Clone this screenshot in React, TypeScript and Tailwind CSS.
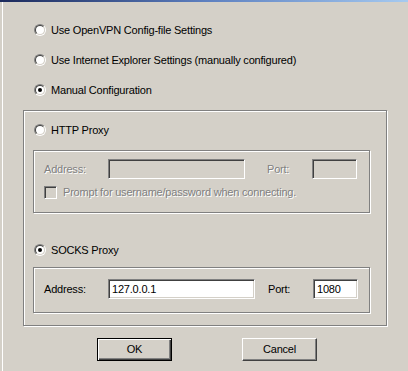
import type { ReactNode } from 'react'

const etched = 'border border-[#808080] shadow-[inset_1px_1px_0_#fff,1px_1px_0_#fff]'
const sunken =
  'border border-t-[#808080] border-l-[#808080] border-b-white border-r-white shadow-[inset_1px_1px_0_#404040,inset_-1px_-1px_0_#d4d0c8]'

function Radio({ checked, children }: { checked?: boolean; children: ReactNode }) {
  return (
    <div className="flex h-[20px] items-center">
      <span className="flex h-[12px] w-[12px] shrink-0 items-center justify-center rounded-full border border-t-[#808080] border-l-[#808080] border-b-white border-r-white">
        <span className="flex h-[10px] w-[10px] items-center justify-center rounded-full border border-t-[#404040] border-l-[#404040] border-b-[#d4d0c8] border-r-[#d4d0c8] bg-white">
          {checked && <span className="h-[4px] w-[4px] rounded-full bg-black" />}
        </span>
      </span>
      <span className="ml-[5px] whitespace-nowrap">{children}</span>
    </div>
  )
}

function Field({ width, value, disabled }: { width: number; value?: string; disabled?: boolean }) {
  return (
    <div
      className={`flex h-[20px] items-center px-[3px] text-black ${sunken} ${disabled ? 'bg-[#d4d0c8]' : 'bg-white'}`}
      style={{ width }}
    >
      {value}
    </div>
  )
}

const dim = 'text-[#808080] [text-shadow:1px_1px_0_#fff]'

function Button({ children, isDefault }: { children: ReactNode; isDefault?: boolean }) {
  return (
    <button
      className={`flex h-[23px] w-[75px] items-center justify-center bg-[#d4d0c8] ${
        isDefault
          ? 'border border-black shadow-[inset_1px_1px_0_#fff,inset_-1px_-1px_0_#404040,inset_-2px_-2px_0_#808080]'
          : 'border border-t-white border-l-white border-b-[#404040] border-r-[#404040] shadow-[inset_-1px_-1px_0_#808080]'
      }`}
    >
      {children}
    </button>
  )
}

export default function App() {
  return (
    <div className="relative h-[371px] w-[408px] overflow-hidden bg-[#d4d0c8] font-['Liberation_Sans',Arial,sans-serif] text-[11px] leading-[13px] tracking-[-0.2px] text-black">
      <div className="h-[2px] bg-linear-to-r from-[#1c2a5c] via-[#5d7fbf] to-[#a6caf0]" />
      <div className="ml-[2px] flex h-[369px] flex-col border-l border-white">
        <div className="ml-[31px] mt-[18px] flex flex-col gap-[10px]">
          <Radio>Use OpenVPN Config-file Settings</Radio>
          <Radio>Use Internet Explorer Settings (manually configured)</Radio>
          <Radio checked>Manual Configuration</Radio>
        </div>

        <div className={`ml-[20px] mt-[10px] flex h-[216px] w-[364px] flex-col ${etched}`}>
          <div className="ml-[10px] mt-[9px]">
            <Radio>HTTP Proxy</Radio>
          </div>
          <div className={`ml-[9px] mt-[10px] h-[63px] w-[337px] ${etched}`}>
            <div className="ml-[10px] mt-[8px] flex items-center">
              <span className={`w-[64px] ${dim}`}>Address:</span>
              <Field width={137} disabled />
              <span className={`ml-[22px] w-[45px] ${dim}`}>Port:</span>
              <Field width={45} disabled />
            </div>
            <div className="ml-[10px] mt-[7px] flex items-center">
              <span className={`h-[13px] w-[13px] shrink-0 ${sunken} bg-[#d4d0c8]`} />
              <span className={`ml-[6px] whitespace-nowrap ${dim}`}>
                Prompt for username/password when connecting.
              </span>
            </div>
          </div>

          <div className="ml-[10px] mt-[27px]">
            <Radio checked>SOCKS Proxy</Radio>
          </div>
          <div className={`ml-[9px] mt-[7px] h-[46px] w-[337px] ${etched}`}>
            <div className="ml-[10px] mt-[11px] flex items-center">
              <span className="w-[64px]">Address:</span>
              <Field width={147} value="127.0.0.1" />
              <span className="ml-[13px] w-[45px]">Port:</span>
              <Field width={45} value="1080" />
            </div>
          </div>
        </div>

        <div className="ml-[94px] mt-[12px] flex gap-[70px]">
          <Button isDefault>OK</Button>
          <Button>Cancel</Button>
        </div>
      </div>
    </div>
  )
}
